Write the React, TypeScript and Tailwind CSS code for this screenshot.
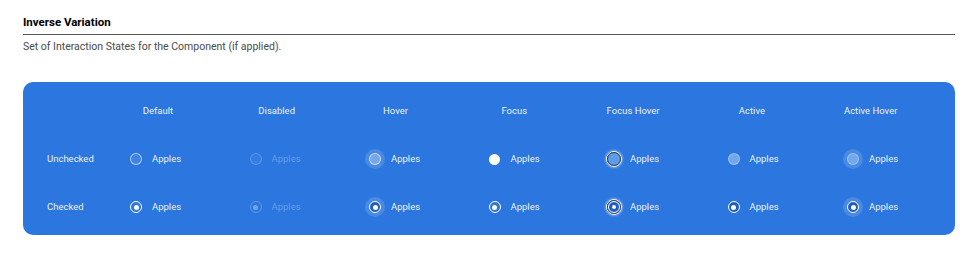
import React from "react";

type State = "default" | "disabled" | "hover" | "focus" | "focusHover" | "active" | "activeHover";

const cols: { key: State; label: string }[] = [
  { key: "default", label: "Default" },
  { key: "disabled", label: "Disabled" },
  { key: "hover", label: "Hover" },
  { key: "focus", label: "Focus" },
  { key: "focusHover", label: "Focus Hover" },
  { key: "active", label: "Active" },
  { key: "activeHover", label: "Active Hover" },
];

function Dot() {
  return <div className="w-[5px] h-[5px] rounded-full bg-white" />;
}

function Radio({ state, checked }: { state: State; checked: boolean }) {
  const halo = state === "hover" || state === "activeHover";
  let inner: React.ReactNode = null;
  if (!checked) {
    switch (state) {
      case "default":
        inner = <div className="w-3 h-3 rounded-full border border-white/60 bg-white/10" />;
        break;
      case "disabled":
        inner = <div className="w-3 h-3 rounded-full border border-white/20 bg-white/5" />;
        break;
      case "hover":
        inner = <div className="w-3 h-3 rounded-full border border-white/60 bg-white/25" />;
        break;
      case "focus":
        inner = <div className="w-[11px] h-[11px] rounded-full bg-white" />;
        break;
      case "focusHover":
        inner = (
          <div className="w-[16px] h-[16px] rounded-full border-[1.5px] border-white shadow-[0_0_3px_rgba(255,255,255,0.8)] flex">
            <div className="flex-1 rounded-full border-[1.5px] border-[#3a3f4a] bg-[#5e9ce9]" />
          </div>
        );
        break;
      case "active":
      case "activeHover":
        inner = <div className="w-3 h-3 rounded-full border border-white/30 bg-[#72a8ed]" />;
        break;
    }
  } else {
    switch (state) {
      case "default":
      case "focus":
        inner = (
          <div className="w-3 h-3 rounded-full border border-white flex items-center justify-center">
            <Dot />
          </div>
        );
        break;
      case "disabled":
        inner = (
          <div className="w-3 h-3 rounded-full border border-white/25 flex items-center justify-center">
            <div className="w-[5px] h-[5px] rounded-full bg-white/35" />
          </div>
        );
        break;
      case "hover":
      case "active":
      case "activeHover":
        inner = (
          <div className="w-3 h-3 rounded-full border border-white bg-[#1f5dc2] flex items-center justify-center">
            <Dot />
          </div>
        );
        break;
      case "focusHover":
        inner = (
          <div className="w-[16px] h-[16px] rounded-full border-[1.5px] border-white shadow-[0_0_3px_rgba(255,255,255,0.8)] flex">
            <div className="flex-1 rounded-full border-[1.5px] border-[#3a3f4a] flex">
              <div className="flex-1 rounded-full border border-white bg-[#1f5dc2] flex items-center justify-center">
                <div className="w-[4px] h-[4px] rounded-full bg-white" />
              </div>
            </div>
          </div>
        );
        break;
    }
  }
  return (
    <div className="w-5 h-5 flex items-center justify-center relative">
      {halo && <div className="absolute inset-0 rounded-full bg-white/15" />}
      <div className="relative flex items-center justify-center">{inner}</div>
    </div>
  );
}

export default function App() {
  const font = { fontFamily: "Roboto, 'Liberation Sans', sans-serif" };
  return (
    <div className="w-[977px] h-[260px] bg-white px-[23px] pt-[14px]" style={font}>
      <div className="text-[11.5px] leading-[16px] font-bold text-black">Inverse Variation</div>
      <div className="mt-[4px] h-px bg-[#5a5a5a] w-[932px]" />
      <div className="mt-[5px] text-[10.5px] leading-[14px] text-[#4a4a4a]">
        Set of Interaction States for the Component (if applied).
      </div>
      <div className="mt-[28px] w-[932px] h-[153px] rounded-[10px] bg-[#2b76df] pt-[5px]">
        <div className="grid grid-cols-[75.5px_repeat(7,118.8px)] h-[48px]">
          <div />
          {cols.map((c) => (
            <div key={c.key} className="flex items-center justify-center text-[9.5px] text-white/95">
              {c.label}
            </div>
          ))}
        </div>
        <div className="grid grid-cols-[76px_repeat(7,119.5px)] grid-rows-[48px_48px]">
          {[false, true].map((checked) => (
            <React.Fragment key={String(checked)}>
              <div className="flex items-center pl-6 text-[9.5px] text-white/95">
                {checked ? "Checked" : "Unchecked"}
              </div>
              {cols.map((c) => (
                <div key={c.key} className="flex items-center pl-[27px] gap-[6px]">
                  <Radio state={c.key} checked={checked} />
                  <span
                    className={
                      "text-[9.5px] " + (c.key === "disabled" ? "text-white/30" : "text-white/95")
                    }
                  >
                    Apples
                  </span>
                </div>
              ))}
            </React.Fragment>
          ))}
        </div>
      </div>
    </div>
  );
}
